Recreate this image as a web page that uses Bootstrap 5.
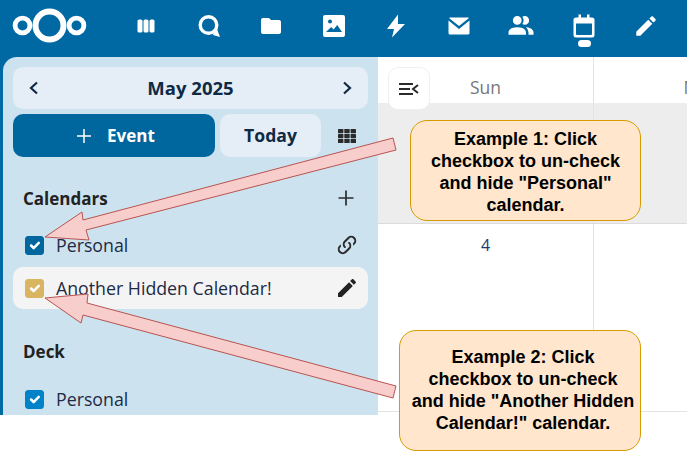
<!DOCTYPE html>
<html lang="en">
<head>
    <meta charset="UTF-8">
    <meta name="viewport" content="width=device-width, initial-scale=1.0">
    <title>Calendar</title>
    <link href="https://cdn.jsdelivr.net/npm/bootstrap@5.3.3/dist/css/bootstrap.min.css" rel="stylesheet">
    <style>
        html, body { height: 100%; margin: 0; overflow: hidden; }
        body { position: relative; background: #fff; font-family: "Open Sans", "Noto Sans", sans-serif; color: #222; }

        .app-frame { height: 415px; background: #0069a3; overflow: hidden; }

        /* Top bar */
        .top-bar { height: 57px; padding-left: 12px; }
        .logo-box { width: 75px; height: 57px; flex: none; }
        .app-icons { margin-left: 28px; height: 51px; align-self: flex-start; }
        .app-item { width: 62.5px; height: 51px; position: relative; }
        .app-item svg { width: 24px; height: 24px; fill: #fff; }
        .app-item svg.icon-people { width: 30px; height: 30px; }
        .app-item svg.icon-pencil { width: 26px; height: 26px; }
        .active-dot { position: absolute; left: 25px; top: 40px; width: 13px; height: 7px; border-radius: 4px; background: #fff; }

        /* Sidebar */
        .side-panel { width: 375px; margin-left: 3px; height: 358px; flex: none; background: #cce2ef; border-top-left-radius: 14px; padding: 10px; overflow: hidden; }
        .month-pill { height: 42px; background: #e5eef6; border-radius: 10px; color: #0f2a44; font-size: 18.5px; font-weight: 700; padding: 0 14px; }
        .action-row { margin-top: 5px; height: 43px; }
        .event-btn { width: 202px; height: 43px; background: #00679e; color: #fff; border-radius: 10px; border: 0; font-size: 17px; font-weight: 700; padding: 0 12px 0 14px; }
        .event-label { margin-left: 6px; }
        .today-btn { width: 101px; height: 43px; margin-left: 5px; background: #e5eef6; color: #0f2a44; border-radius: 10px; border: 0; font-size: 17.6px; font-weight: 700; padding: 0; }
        .grid-icon { width: 18px; height: 14px; margin-left: 17px; }
        .group-title { font-size: 17px; font-weight: 700; color: #222; line-height: 24px; padding-left: 10px; padding-right: 11px; }
        .add-icon { margin-top: -2px; margin-right: 2px; }
        .group-cals { margin-top: 30px; }
        .group-deck { margin-top: 31px; }
        .cal-row { height: 42px; border-radius: 10px; padding: 0 9px 0 12px; margin-top: 1px; font-size: 17.75px; color: #1e2a44; }
        .group-title + .cal-row { margin-top: 13px; }
        .group-deck .group-title + .cal-row { margin-top: 14px; }
        .cal-row.is-hover { background: #f4f4f4; }
        .form-check-input.cal-check { width: 19px; height: 19px; margin: 0 12px 0 0; border-radius: 3px; flex: none; }
        .form-check-input.cal-blue:checked { background-color: #00679e; border-color: #00679e; }
        .form-check-input.cal-gold:checked { background-color: #d9b461; border-color: #d9b461; }
        .form-check-input.cal-sky:checked { background-color: #0082c9; border-color: #0082c9; }
        .row-action { width: 24px; height: 24px; flex: none; }

        /* Week view */
        .week-view { flex: 1; background: #fff; height: 358px; position: relative; overflow: hidden; }
        .day-row { display: flex; }
        .day-cell { width: 216px; flex: none; border-right: 1px solid #e3e3e3; text-align: center; }
        .day-cell + .day-cell { border-right: 0; }
        .head-row { height: 46px; }
        .head-row .day-cell { color: #777; font-size: 17.5px; line-height: 60px; }
        .today-band { height: 121px; background: #ededed; border-bottom: 1px solid #dcdcdc; }
        .date-row { height: 188px; border-bottom: 1px solid #e3e3e3; }
        .date-row .day-cell { color: #1a3a70; font-size: 16px; padding-top: 9px; }
        .tail-row { height: 3px; }
        .toggle-btn { position: absolute; left: 10px; top: 10px; width: 42px; height: 43px; background: #fff; border: 1px solid #f0f0f0; border-radius: 10px; padding: 0; }

        /* Annotation overlay */
        .note-layer { position: absolute; left: 0; top: 0; width: 687px; height: 451px; pointer-events: none; }
        .note-box { position: absolute; background: #ffe6cc; border: 1px solid #d79b00; border-radius: 17px; font-family: "Liberation Sans", Arial, sans-serif; font-weight: 700; font-size: 18px; line-height: 22px; color: #000; text-align: center; }
        .note-one { left: 410px; top: 120px; width: 231px; height: 101px; padding-top: 7px; }
        .note-two { left: 399px; top: 330px; width: 242px; height: 121px; padding: 15px 0 0 6px; }
    </style>
</head>
<body>
    <div class="app-frame">
        <header class="top-bar d-flex align-items-center">
            <div class="logo-box">
                <svg width="75" height="57" viewBox="0 0 75 57" fill="none" stroke="#fff">
                    <circle cx="10.5" cy="25.5" r="7.4" stroke-width="4.8"/>
                    <circle cx="37.5" cy="25.5" r="14" stroke-width="6"/>
                    <circle cx="64.5" cy="25.5" r="7.4" stroke-width="4.8"/>
                </svg>
            </div>
            <nav class="app-icons d-flex">
                <div class="app-item d-flex align-items-center justify-content-center">
                    <svg viewBox="0 0 24 24"><rect x="3.500" y="5.500" width="5" height="13" rx="1.600"/><rect x="9.500" y="5.500" width="5" height="13" rx="1.600"/><rect x="15.500" y="5.500" width="5" height="13" rx="1.600"/></svg>
                </div>
                <div class="app-item d-flex align-items-center justify-content-center">
                    <svg viewBox="0 0 24 24"><circle cx="11.500" cy="11" r="8.300" fill="none" stroke="#fff" stroke-width="3.400"/><path d="M17 17.500 20 15l3 8-7-2z"/></svg>
                </div>
                <div class="app-item d-flex align-items-center justify-content-center">
                    <svg viewBox="0 0 24 24"><path d="M10 4H4c-1.100 0-2 .9-2 2v12c0 1.100.9 2 2 2h16c1.100 0 2-.9 2-2V8c0-1.100-.9-2-2-2h-8l-2-2z"/></svg>
                </div>
                <div class="app-item d-flex align-items-center justify-content-center">
                    <svg viewBox="0 0 24 24"><path fill-rule="evenodd" d="M3 1h18a2 2 0 0 1 2 2v18a2 2 0 0 1-2 2H3a2 2 0 0 1-2-2V3a2 2 0 0 1 2-2zm5 4.500a2 2 0 1 0 0 4 2 2 0 0 0 0-4zM4 18h16l-4.800-7-3.600 4.600-2.400-2.600z"/></svg>
                </div>
                <div class="app-item d-flex align-items-center justify-content-center">
                    <svg viewBox="0 0 24 24"><path d="M14 .5 3 15h7l-2 8.500L21 10h-7z"/></svg>
                </div>
                <div class="app-item d-flex align-items-center justify-content-center">
                    <svg viewBox="0 0 24 24"><path d="M3 3.500h18a1.500 1.500 0 0 1 1 .4L12 12 2 3.900a1.500 1.500 0 0 1 1-.4zM1.500 6.500 12 15 22.500 6.500V19a1.500 1.500 0 0 1-1.500 1.500H3A1.500 1.500 0 0 1 1.500 19z"/></svg>
                </div>
                <div class="app-item d-flex align-items-center justify-content-center">
                    <svg class="icon-people" viewBox="0 0 24 24"><path d="M16 17v2H2v-2s0-4 7-4 7 4 7 4m-3.500-9.500A3.500 3.500 0 1 0 9 11a3.500 3.500 0 0 0 3.500-3.500m3.440 5.500A5.320 5.320 0 0 1 18 17v2h4v-2s0-3.630-6.060-4M15 4a3.390 3.390 0 0 0-1.930.59 5 5 0 0 1 0 5.820A3.390 3.390 0 0 0 15 11a3.500 3.500 0 0 0 0-7z"/></svg>
                </div>
                <div class="app-item d-flex align-items-center justify-content-center">
                    <svg viewBox="0 0 24 24"><path fill-rule="evenodd" d="M6.500.5H9v3h6v-3h2.500v3H20A2.500 2.500 0 0 1 22.500 6v15a2.500 2.500 0 0 1-2.500 2.500H4A2.500 2.500 0 0 1 1.500 21V6A2.500 2.500 0 0 1 4 3.500h2.500zM4 9.500V20a1 1 0 0 0 1 1h14a1 1 0 0 0 1-1V9.500z"/></svg>
                    <span class="active-dot"></span>
                </div>
                <div class="app-item d-flex align-items-center justify-content-center">
                    <svg class="icon-pencil" viewBox="0 0 24 24"><path d="M20.710 7.040c.39-.39.39-1.040 0-1.410l-2.340-2.340c-.37-.39-1.020-.39-1.410 0l-1.840 1.830 3.750 3.750M3 17.250V21h3.750L17.810 9.930l-3.750-3.750L3 17.250z"/></svg>
                </div>
            </nav>
        </header>

        <div class="d-flex">
            <aside class="side-panel">
                <div class="month-pill d-flex align-items-center justify-content-between">
                    <svg width="14" height="14" viewBox="0 0 14 14" fill="none" stroke="#0f2a44" stroke-width="2.200"><path d="M10 1.500 4 7l6 5.500"/></svg>
                    <span>May 2025</span>
                    <svg width="14" height="14" viewBox="0 0 14 14" fill="none" stroke="#0f2a44" stroke-width="2.200"><path d="M4 1.500 10 7l-6 5.500"/></svg>
                </div>
                <div class="action-row d-flex align-items-center">
                    <button class="event-btn btn d-flex align-items-center justify-content-center gap-2" type="button">
                        <svg width="18" height="18" viewBox="0 0 18 18" stroke="#fff" stroke-width="1.500"><path d="M9 2v14M2 9h14"/></svg>
                        <span class="event-label">Event</span>
                    </button>
                    <button class="today-btn btn" type="button">Today</button>
                    <svg class="grid-icon" viewBox="0 0 18 14" fill="#2b2b2b"><rect width="5.400" height="4.200" rx=".6"/><rect x="6.300" width="5.400" height="4.200" rx=".6"/><rect x="12.600" width="5.400" height="4.200" rx=".6"/><rect y="4.900" width="5.400" height="4.200" rx=".6"/><rect x="6.300" y="4.900" width="5.400" height="4.200" rx=".6"/><rect x="12.600" y="4.900" width="5.400" height="4.200" rx=".6"/><rect y="9.800" width="5.400" height="4.200" rx=".6"/><rect x="6.300" y="9.800" width="5.400" height="4.200" rx=".6"/><rect x="12.600" y="9.800" width="5.400" height="4.200" rx=".6"/></svg>
                </div>

                <div class="group-cals">
                    <div class="group-title d-flex align-items-center justify-content-between">
                        <span>Calendars</span>
                        <svg class="add-icon" width="18" height="18" viewBox="0 0 18 18" stroke="#2b2b2b" stroke-width="1.700"><path d="M9 1.500v15M1.500 9h15"/></svg>
                    </div>
                    <div class="cal-row d-flex align-items-center">
                        <input class="form-check-input cal-check cal-blue" type="checkbox" checked aria-label="Personal">
                        <span class="flex-grow-1">Personal</span>
                        <svg class="row-action" viewBox="0 0 24 24" fill="#2b2b2b"><path d="M10.590 13.410c.41.39.41 1.030 0 1.420-.39.390-1.030.390-1.420 0a5.003 5.003 0 0 1 0-7.070l3.540-3.540a5.003 5.003 0 0 1 7.070 0 5.003 5.003 0 0 1 0 7.070l-1.490 1.490c.010-.820-.120-1.640-.4-2.420l.47-.480a2.982 2.982 0 0 0 0-4.240 2.982 2.982 0 0 0-4.240 0l-3.530 3.530a2.982 2.982 0 0 0 0 4.240zm2.820-4.240c.39-.39 1.030-.39 1.420 0a5.003 5.003 0 0 1 0 7.070l-3.540 3.540a5.003 5.003 0 0 1-7.070 0 5.003 5.003 0 0 1 0-7.070l1.490-1.490c-.010.820.12 1.640.4 2.430l-.47.470a2.982 2.982 0 0 0 0 4.240 2.982 2.982 0 0 0 4.240 0l3.530-3.530a2.982 2.982 0 0 0 0-4.240.973.973 0 0 1 0-1.420z"/></svg>
                    </div>
                    <div class="cal-row is-hover d-flex align-items-center">
                        <input class="form-check-input cal-check cal-gold" type="checkbox" checked aria-label="Another Hidden Calendar!">
                        <span class="flex-grow-1">Another Hidden Calendar!</span>
                        <svg class="row-action" viewBox="0 0 24 24" fill="#222"><path d="M20.710 7.040c.39-.39.39-1.040 0-1.410l-2.340-2.340c-.37-.39-1.020-.39-1.410 0l-1.840 1.830 3.750 3.750M3 17.250V21h3.750L17.810 9.930l-3.750-3.750L3 17.250z"/></svg>
                    </div>
                </div>

                <div class="group-deck">
                    <div class="group-title">Deck</div>
                    <div class="cal-row d-flex align-items-center">
                        <input class="form-check-input cal-check cal-sky" type="checkbox" checked aria-label="Personal">
                        <span>Personal</span>
                    </div>
                </div>
            </aside>

            <main class="week-view">
                <div class="day-row head-row">
                    <div class="day-cell">Sun</div>
                    <div class="day-cell">Mon</div>
                </div>
                <div class="day-row today-band">
                    <div class="day-cell"></div>
                    <div class="day-cell"></div>
                </div>
                <div class="day-row date-row">
                    <div class="day-cell">4</div>
                    <div class="day-cell"></div>
                </div>
                <div class="day-row tail-row">
                    <div class="day-cell"></div>
                </div>
                <button class="toggle-btn d-flex align-items-center justify-content-center" type="button" aria-label="Toggle navigation">
                    <svg width="20" height="14" viewBox="0 0 20 14" fill="none" stroke="#2b2b2b" stroke-width="2"><path d="M0 2h14M0 7h11M0 12h14M19 3l-5 4 5 4"/></svg>
                </button>
            </main>
        </div>
    </div>

    <div class="note-layer">
        <svg width="687" height="451" viewBox="0 0 687 451" fill="#f8cecc" stroke="#b85450">
            <polygon points="45,237 82,212 83,220 393,138 396,150 86,230 89,240"/>
            <polygon points="45,298 88,294 87,303 396,386 393,398 83,315 81,323"/>
        </svg>
        <div class="note-box note-one">Example 1: Click<br>checkbox to un-check<br>and hide "Personal"<br>calendar.</div>
        <div class="note-box note-two">Example 2: Click<br>checkbox to un-check<br>and hide "Another Hidden<br>Calendar!" calendar.</div>
    </div>
</body>
</html>
